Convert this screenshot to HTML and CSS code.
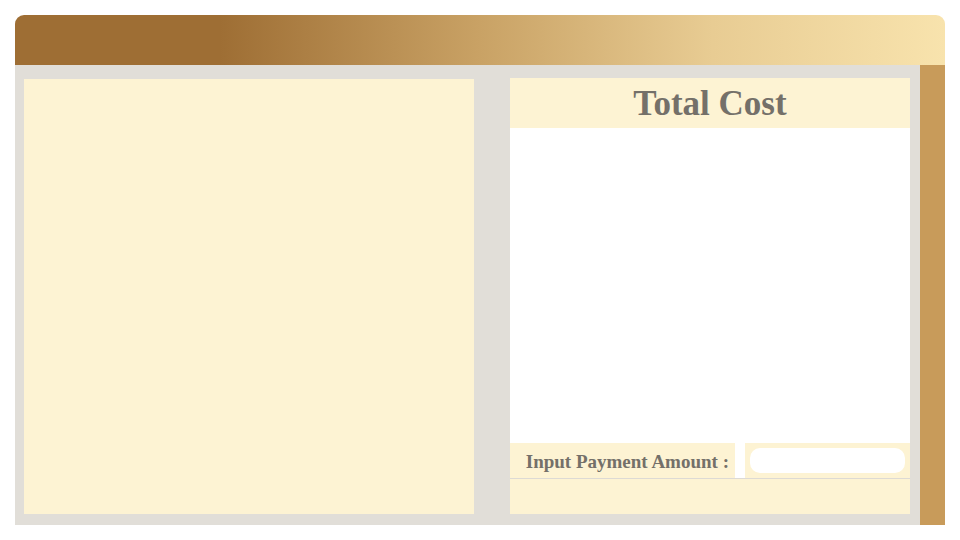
FILE: index.html
```html
<!DOCTYPE html>
<html>
<head>
<meta charset="utf-8">
<link rel="stylesheet" href="styles.css">
</head>
<body>
<div class="app">
  <div class="header"></div>
  <div class="main">
    <div class="workspace">
      <div class="left-panel"></div>
      <div class="right-panel">
        <div class="title">Total Cost</div>
        <div class="cost-list"></div>
        <div class="pay-row">
          <div class="pay-label">Input Payment Amount :</div>
          <div class="pay-gap"></div>
          <div class="pay-cell"><div class="pay-input"></div></div>
        </div>
        <div class="footer"></div>
      </div>
    </div>
    <div class="side-bar"></div>
  </div>
</div>
</body>
</html>
```

FILE: styles.css
```css
html, body {
  margin: 0;
  padding: 0;
  background: #ffffff;
}
body {
  padding: 15px;
  font-family: "Liberation Serif", "DejaVu Serif", serif;
}
.app {
  width: 930px;
}
.header {
  height: 50px;
  border-radius: 9px 9px 0 0;
  background: linear-gradient(90deg, #9e6e34 0%, #9e6e34 22%, #c9a265 50%, #e8cc93 75%, #f8e3ad 100%);
}
.main {
  display: flex;
  height: 460px;
}
.workspace {
  flex: 1;
  background: #e1ded8;
  display: flex;
  align-items: flex-start;
  gap: 36px;
  padding: 13px 10px 11px 9px;
}
.side-bar {
  width: 25px;
  background: #c89b5a;
}
.left-panel {
  width: 450px;
  height: 435px;
  margin-top: 1px;
  background: #fdf3d3;
}
.right-panel {
  width: 400px;
  height: 436px;
  display: flex;
  flex-direction: column;
  background: #ffffff;
}
.title {
  height: 50px;
  background: #fdf3d3;
  color: #747069;
  font-weight: bold;
  font-size: 35px;
  line-height: 52px;
  text-align: center;
}
.cost-list {
  flex: 1;
  background: #ffffff;
}
.pay-row {
  height: 35px;
  display: flex;
}
.pay-label {
  width: 225px;
  box-sizing: border-box;
  padding-right: 6px;
  background: #fdf3d3;
  color: #747069;
  font-weight: bold;
  font-size: 19px;
  line-height: 37px;
  text-align: right;
  white-space: nowrap;
}
.pay-gap {
  width: 10px;
  background: #ffffff;
}
.pay-cell {
  flex: 1;
  background: #fdf3d3;
  padding: 5px;
}
.pay-input {
  height: 25px;
  border-radius: 10px;
  background: #ffffff;
}
.footer {
  height: 35px;
  border-top: 1px solid #dddad4;
  background: #fdf3d3;
}
```
